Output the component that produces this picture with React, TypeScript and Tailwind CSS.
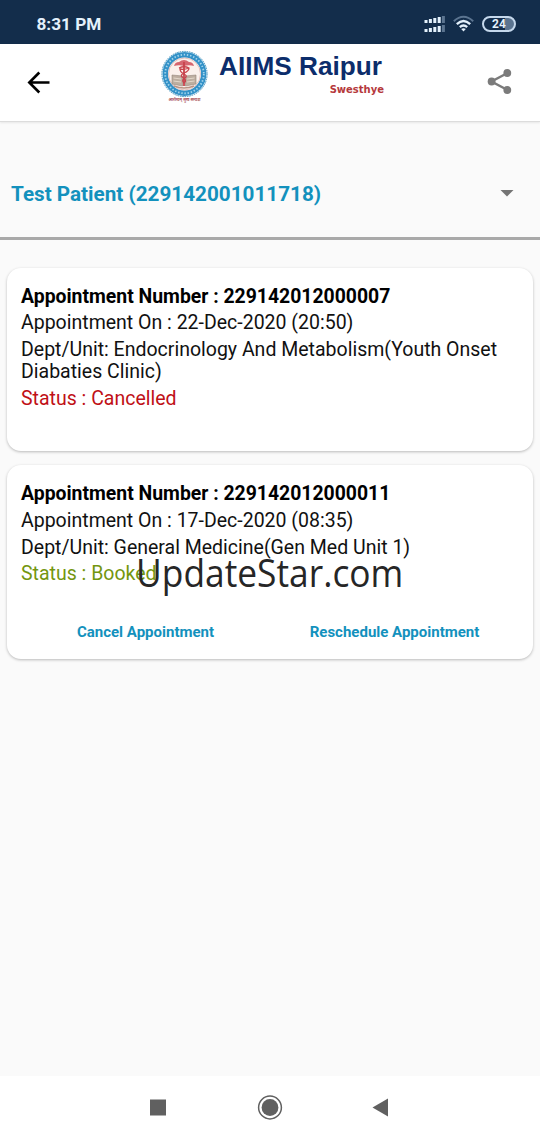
import type { ReactNode } from "react";

interface Appointment {
  number: string;
  on: string;
  dept: string;
  status: string;
  statusClass: string;
  canEdit: boolean;
}

const APPOINTMENTS: Appointment[] = [
  {
    number: "229142012000007",
    on: "22-Dec-2020 (20:50)",
    dept: "Endocrinology And Metabolism(Youth Onset Diabaties Clinic)",
    status: "Cancelled",
    statusClass: "text-[#c01016]",
    canEdit: false,
  },
  {
    number: "229142012000011",
    on: "17-Dec-2020 (08:35)",
    dept: "General Medicine(Gen Med Unit 1)",
    status: "Booked",
    statusClass: "text-[#74960f]",
    canEdit: true,
  },
];

const SIGNAL_BARS = [
  { x: 0.5, h: 3, c: "#e4f1fc" },
  { x: 4.9, h: 4, c: "#e4f1fc" },
  { x: 9.3, h: 5, c: "#e4f1fc" },
  { x: 13.7, h: 6, c: "#e4f1fc" },
  { x: 17.9, h: 7, c: "#5b7490" },
];

function StatusBar() {
  return (
    <div className="flex h-11 shrink-0 items-center justify-between bg-[#132d4b] pl-[36.500px] pr-[24px] pt-1">
      <span className="text-[17.200px] leading-5 font-bold text-[#e4f1fc]">8:31 PM</span>
      <div className="flex items-center">
        <svg className="mr-2" width="21" height="18" viewBox="0 0 21 18">
          {SIGNAL_BARS.map((b) => (
            <g key={b.x} fill={b.c}>
              <rect x={b.x} y={8 - b.h} width="3" height={b.h} />
              <rect x={b.x} y={17 - b.h} width="3" height={b.h} />
            </g>
          ))}
        </svg>
        <svg className="mr-[8px]" width="21" height="18" viewBox="0 0 21 18" fill="none" strokeWidth="2">
          <path d="M0.8 6.2Q10.5 -2.8 20.2 6.2" stroke="#5b7490" />
          <path d="M3.8 9.2Q10.5 2.8 17.2 9.2" stroke="#e4f1fc" strokeWidth="2.3" />
          <path d="M6.8 12.2Q10.5 8.8 14.2 12.2" stroke="#e4f1fc" strokeWidth="2.3" />
          <path d="M8.2 14.1Q10.5 12.5 12.8 14.1L10.5 16.4Z" fill="#e4f1fc" />
        </svg>
        <div className="flex h-4 w-[34px] items-center justify-center rounded-full border-2 border-[#c5d8ec] bg-linear-to-r from-[#132d4b] from-70% to-[#5b7490] to-70%">
          <span className="text-[12px] leading-none font-bold text-[#e4f1fc]">24</span>
        </div>
      </div>
    </div>
  );
}

function Emblem() {
  return (
    <svg width="48" height="54" viewBox="0 0 48 54">
      <circle cx="24.5" cy="24" r="22.6" fill="#fff" stroke="#3d91bd" strokeWidth="1" strokeDasharray="1.6 0.8" />
      <circle cx="24.5" cy="24" r="19.2" fill="none" stroke="#3391c7" strokeWidth="5.4" />
      <circle cx="24.5" cy="24" r="19.3" fill="none" stroke="#a5d6ed" strokeWidth="1.8" strokeDasharray="1.4 1.8" />
      <circle cx="24.5" cy="24" r="16" fill="#fbf1ec" stroke="#d7a9a5" strokeWidth="0.7" />
      {/* canopy */}
      <path d="M14 16Q15 12 19 12Q24 8 29 12Q33 12 34 16Q29 14.5 24 16Q19 14.5 14 16Z" fill="#d5656f" />
      {/* book */}
      <path d="M12 25L22.5 26V36L12 34ZM36 25L25.5 26V36L36 34Z" fill="#bdaea0" stroke="#96867b" strokeWidth="0.6" />
      <path d="M13.5 28L21 29M13.5 31L21 32M27 29L34.5 28M27 32L34.5 31" stroke="#eee2d4" strokeWidth="0.8" />
      {/* staff and snakes */}
      <path d="M24 12V36" stroke="#c8434c" strokeWidth="1.8" />
      <path
        d="M19 18Q24 15.5 29 18Q29 21 24 23Q20 25 22 27Q28 30 24 33M29 18Q24 20 20 19Q20 22 24 24Q28 26 25 28Q21 30 24 33"
        fill="none"
        stroke="#c8434c"
        strokeWidth="1.3"
      />
      <path d="M14 36Q24 40 34 36" fill="none" stroke="#b99384" strokeWidth="1.6" />
      <text
        x="24.5"
        y="50.5"
        textAnchor="middle"
        textLength="32"
        lengthAdjust="spacingAndGlyphs"
        fontSize="4.5"
        fontWeight="700"
        fill="#a8515b"
        fontFamily="Noto Sans, sans-serif"
      >
        आरोग्यम् सुख सम्पदा
      </text>
    </svg>
  );
}

function AppHeader() {
  return (
    <header className="flex h-[78px] shrink-0 items-start border-b border-[#dcdcdc] bg-white shadow-[0_1px_2px_rgba(0,0,0,0.08)]">
      <button className="mt-[27px] ml-[27px]" aria-label="Back">
        <svg width="23" height="23" viewBox="0 0 23 23" fill="none" stroke="#000" strokeWidth="2.6">
          <path d="M22.5 11.5H2.5M12.3 1.5L2.3 11.5L12.3 21.5" />
        </svg>
      </button>
      <div className="mt-[6px] ml-[110px] flex">
        <Emblem />
        <div className="mt-px ml-[11px] flex w-[165px] flex-col font-['Liberation_Sans',Arial,sans-serif] font-bold">
          <span className="text-[26.200px] leading-[31px] whitespace-nowrap text-[#0c2d6b]">AIIMS Raipur</span>
          <span className="self-end font-['DejaVu_Sans',sans-serif] text-[10px] leading-[15px] text-[#b5393c]">
            Swesthye
          </span>
        </div>
      </div>
      <button className="mt-[24px] mr-[28px] ml-auto" aria-label="Share">
        <svg width="25" height="28" viewBox="0 0 25 28" fill="#7b7b7b">
          <path d="M20.5 5L4.5 13.5L20.5 22" fill="none" stroke="#7b7b7b" strokeWidth="2.5" />
          <circle cx="20.3" cy="5" r="3.9" />
          <circle cx="4.6" cy="13.5" r="3.9" />
          <circle cx="20.3" cy="22" r="3.9" />
        </svg>
      </button>
    </header>
  );
}

function ActionButton({ children }: { children: ReactNode }) {
  return (
    <button className="flex-1 text-center text-[15px] leading-[18px] font-bold whitespace-nowrap text-[#1391bd]">
      {children}
    </button>
  );
}

function AppointmentCard({ item }: { item: Appointment }) {
  return (
    <article className="rounded-[14px] bg-white px-[14px] pt-[18px] shadow-[0_1px_3px_rgba(0,0,0,0.26)]">
      <div className="flex flex-col gap-1 text-[19.500px] leading-[22.600px] text-[#111]">
        <p className="text-[19.400px] font-bold text-black">Appointment Number : {item.number}</p>
        <p>Appointment On : {item.on}</p>
        <p>Dept/Unit: {item.dept}</p>
        <p className={item.statusClass}>Status : {item.status}</p>
      </div>
      {item.canEdit ? (
        <div className="mt-[37.500px] flex pb-[18px]">
          <ActionButton>Cancel Appointment</ActionButton>
          <ActionButton>Reschedule Appointment</ActionButton>
        </div>
      ) : (
        <div className="h-[41px]" />
      )}
    </article>
  );
}

function NavBar() {
  return (
    <nav className="flex h-16 shrink-0 items-center justify-center bg-white">
      <svg width="240" height="26" viewBox="0 0 240 26" fill="#606060">
        <rect x="0" y="4.5" width="16" height="16" />
        <circle cx="120" cy="12.5" r="11.4" fill="none" stroke="#606060" strokeWidth="1.5" />
        <circle cx="120" cy="12.5" r="8.4" />
        <path d="M222.5 12.5L238 3.5V21.5Z" />
      </svg>
    </nav>
  );
}

export default function App() {
  return (
    <div className="relative flex h-[1140px] w-[540px] flex-col overflow-hidden bg-[#fafafa] font-['Roboto',sans-serif]">
      <StatusBar />
      <AppHeader />
      <main className="flex flex-1 flex-col">
        <div className="flex h-[118px] shrink-0 items-center justify-between border-b-[3px] border-[#a9a9a9] pt-[28px] pr-[26px] pl-[11px]">
          <span className="text-[20.700px] leading-6 font-bold text-[#1391bd]">Test Patient (229142001011718)</span>
          <svg width="14" height="7" viewBox="0 0 14 7">
            <path d="M0.5 0H13.5L7 6.5Z" fill="#747474" />
          </svg>
        </div>
        <div className="flex flex-col gap-[14px] px-[7px] pt-[27.500px]">
          {APPOINTMENTS.map((a) => (
            <AppointmentCard key={a.number} item={a} />
          ))}
        </div>
      </main>
      <NavBar />
      {/* watermark */}
      <span className="absolute top-[546px] left-[136px] origin-left scale-x-[0.93] font-['Open_Sans',sans-serif] text-[38px] leading-[52px] whitespace-nowrap text-[#262626]">
        UpdateStar.com
      </span>
    </div>
  );
}
